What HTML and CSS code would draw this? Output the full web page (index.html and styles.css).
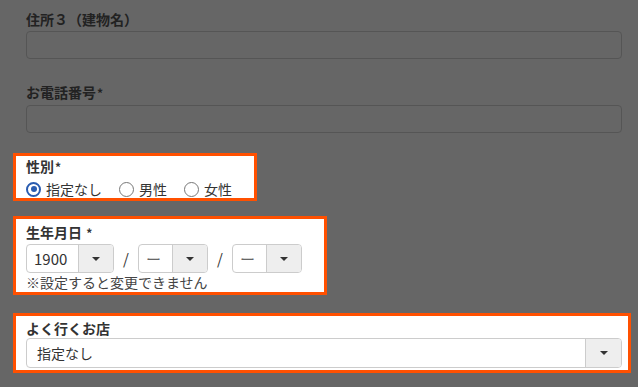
FILE: index.html
```html
<!DOCTYPE html>
<html lang="ja">
  <head>
    <meta charset="UTF-8" />
    <meta name="viewport" content="width=device-width, initial-scale=1" />
    <title>会員情報の入力</title>
    <link rel="stylesheet" href="styles.css">
  </head>
  <body>
    <form class="member-form" autocomplete="off">
      <div class="field is-dim field-address3">
        <label for="address3">住所３（建物名）</label>
        <input type="text" id="address3" name="address3" />
      </div>

      <div class="field is-dim field-tel">
        <label for="tel">お電話番号<span class="req">*</span></label>
        <input type="tel" id="tel" name="tel" />
      </div>

      <div class="field is-focus field-gender">
        <div class="field-label">性別<span class="req">*</span></div>
        <div class="radio-row">
          <label class="radio is-checked"><span class="radio-mark"></span>指定なし</label>
          <label class="radio"><span class="radio-mark"></span>男性</label>
          <label class="radio"><span class="radio-mark"></span>女性</label>
        </div>
      </div>

      <div class="field is-focus field-birth">
        <div class="field-label">生年月日 <span class="req">*</span></div>
        <div class="date-row">
          <div class="select select-year">
            <span class="select-value">1900</span>
            <span class="select-arrow"></span>
          </div>
          <span class="date-sep">/</span>
          <div class="select select-short">
            <span class="select-value is-empty">ー</span>
            <span class="select-arrow"></span>
          </div>
          <span class="date-sep">/</span>
          <div class="select select-short">
            <span class="select-value is-empty">ー</span>
            <span class="select-arrow"></span>
          </div>
        </div>
        <p class="note">※設定すると変更できません</p>
      </div>

      <div class="field is-focus field-shop">
        <div class="field-label">よく行くお店</div>
        <div class="select select-wide">
          <span class="select-value">指定なし</span>
          <span class="select-arrow"></span>
        </div>
      </div>
    </form>
  </body>
</html>
```

FILE: styles.css
```css
* {
  box-sizing: border-box;
}
body {
  margin: 0;
  background: #666;
  font-family: "Noto Sans CJK JP", "Noto Sans", sans-serif;
  font-size: 14px;
  color: #333;
}
.member-form {
  display: flex;
  flex-direction: column;
  padding: 9px 7px 0 13px;
}

/* fields */
.field label,
.field-label {
  display: block;
  font-weight: 700;
  font-size: 14px;
  line-height: 20px;
}
.req {
  font-size: 12px;
  margin-left: 1px;
}
.field input[type="text"],
.field input[type="tel"] {
  display: block;
  width: 100%;
  height: 28px;
  margin-top: 2px;
  border: 1px solid #555;
  border-radius: 4px;
  background: transparent;
}
.is-dim {
  padding: 0 9px 0 13px;
  color: #222;
}
.field-address3 {
  margin-bottom: 23px;
}
.field-tel {
  margin-bottom: 20px;
}

/* highlighted fields */
.is-focus {
  background: #fff;
  border: 3px solid #ff5000;
  padding: 0 10px;
}
.field-gender {
  align-self: flex-start;
  width: 244px;
  height: 48px;
  margin-bottom: 15px;
}
.field-birth {
  align-self: flex-start;
  width: 314px;
  height: 79px;
  padding-top: 3px;
  margin-bottom: 18px;
}
.field-shop {
  height: 60px;
  padding: 2px 6px 0 10px;
}

/* radios */
.radio-row {
  display: flex;
  gap: 17px;
  margin-top: 1px;
}
.field .radio {
  display: flex;
  align-items: center;
  gap: 5px;
  font-weight: 400;
  font-size: 14px;
  line-height: 22px;
  color: #333;
}
.radio-mark {
  width: 15px;
  height: 15px;
  border: 1.5px solid #777;
  border-radius: 50%;
  position: relative;
}
.is-checked .radio-mark {
  border: 2px solid #2a5cb0;
}
.is-checked .radio-mark::after {
  content: "";
  position: absolute;
  left: 2.5px;
  top: 2.5px;
  width: 6px;
  height: 6px;
  border-radius: 50%;
  background: #2a5cb0;
}

/* selects */
.date-row {
  display: flex;
  align-items: center;
  margin-top: 1px;
}
.select {
  display: flex;
  height: 29px;
  border: 1px solid #ccc;
  border-radius: 4px;
  background: #fff;
  overflow: hidden;
}
.select-value {
  flex: 1;
  display: flex;
  align-items: center;
  padding: 0 7px;
  font-size: 15px;
  color: #333;
}
.select-value.is-empty {
  color: #666;
}
.select-arrow {
  width: 35px;
  background: #eee;
  border-left: 1px solid #ccc;
  position: relative;
}
.select-arrow::after {
  content: "";
  position: absolute;
  left: 50%;
  top: 50%;
  margin: -2px 0 0 -4px;
  border-left: 4px solid transparent;
  border-right: 4px solid transparent;
  border-top: 4px solid #333;
}
.select-year {
  width: 88px;
}
.select-short {
  width: 70px;
}
.select-wide {
  width: 100%;
  height: 30px;
}
.select-wide .select-value {
  padding-left: 10px;
  font-size: 14px;
}
.select-wide .select-arrow {
  width: 36px;
}
.date-sep {
  width: 24px;
  text-align: center;
  font-size: 15px;
  color: #333;
}
.note {
  margin: 0;
  font-size: 14px;
  line-height: 18px;
  color: #444;
}
```
